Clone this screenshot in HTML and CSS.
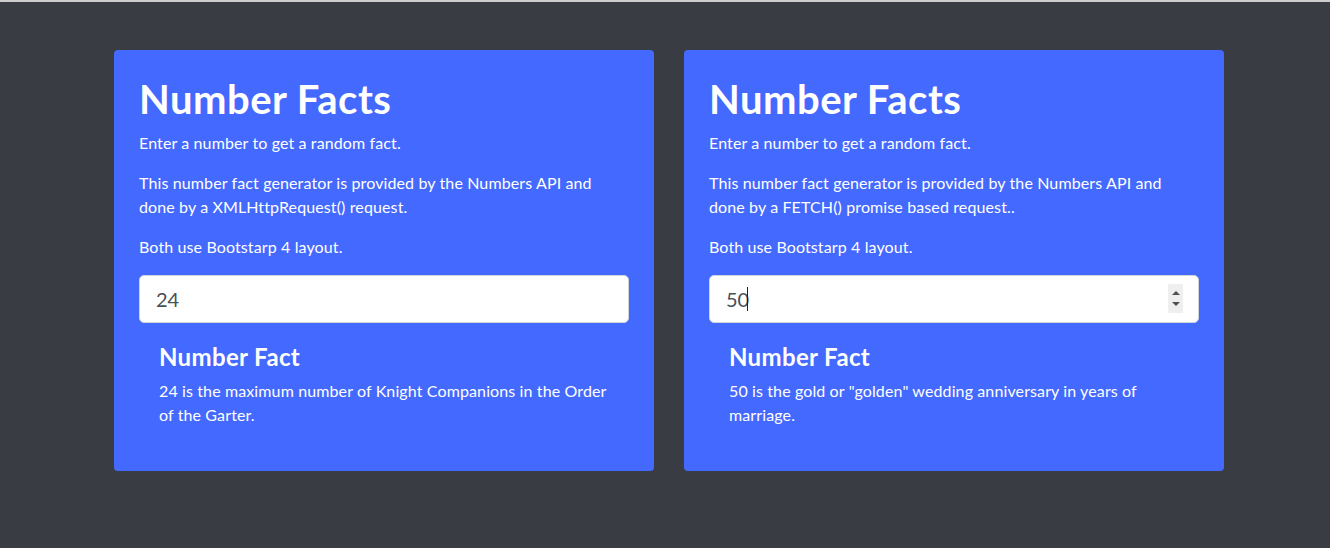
FILE: index.html
```html
<!DOCTYPE html>
<html lang="en">
<head>
<meta charset="utf-8">
<title>Number Facts</title>
<link rel="stylesheet" href="styles.css">
</head>
<body>
<div class="page">
  <div class="cards">
    <section class="card">
      <h1 class="title">Number Facts</h1>
      <p class="lead">Enter a number to get a random fact.</p>
      <p>This number fact generator is provided by the Numbers API and done by a XMLHttpRequest() request.</p>
      <p>Both use Bootstarp 4 layout.</p>
      <div class="field">
        <input class="num-input" type="text" value="24">
      </div>
      <div class="result">
        <h4 class="result-title">Number Fact</h4>
        <p class="fact">24 is the maximum number of Knight Companions in the Order of the Garter.</p>
      </div>
    </section>
    <section class="card">
      <h1 class="title">Number Facts</h1>
      <p class="lead">Enter a number to get a random fact.</p>
      <p>This number fact generator is provided by the Numbers API and done by a FETCH() promise based request..</p>
      <p>Both use Bootstarp 4 layout.</p>
      <div class="field">
        <input class="num-input" type="text" value="50" autofocus>
        <span class="caret"></span>
        <span class="spinner"><span class="up"></span><span class="down"></span></span>
      </div>
      <div class="result">
        <h4 class="result-title">Number Fact</h4>
        <p class="fact">50 is the gold or "golden" wedding anniversary in years of marriage.</p>
      </div>
    </section>
  </div>
</div>
</body>
</html>
```
FILE: styles.css
```css
* { box-sizing: border-box; }
html, body { margin: 0; padding: 0; }
body {
  background: #3a3c44;
  border-top: 2px solid #cdcdcd;
  font-family: Lato, "Open Sans", sans-serif;
  color: #fff;
  height: 548px;
  overflow: hidden;
}
.page {
  padding: 48px 0 0 114px;
}
.cards {
  display: flex;
  gap: 30px;
}
.card {
  width: 540px;
  height: 421px;
  background: #4469ff;
  border-radius: 4px;
  padding: 25px;
}
.title {
  margin: 0 0 8px;
  font-size: 40px;
  line-height: 48px;
  font-weight: 700;
  letter-spacing: 0.5px;
}
.card p {
  margin: 0 0 16px;
  font-size: 16px;
  line-height: 24px;
  letter-spacing: 0.12px;
}
.field {
  position: relative;
}
.num-input {
  display: block;
  width: 100%;
  height: 48px;
  border: 1px solid #ced4da;
  border-radius: 5px;
  padding: 0 16px;
  font-family: inherit;
  font-size: 20px;
  color: #495057;
  background: #fff;
  outline: none;
}
.caret {
  position: absolute;
  left: 38px;
  top: 12px;
  width: 1px;
  height: 24px;
  background: #222;
}
.spinner {
  position: absolute;
  right: 16px;
  top: 9px;
  width: 15px;
  height: 29px;
  background: #efefef;
  display: flex;
  flex-direction: column;
  align-items: center;
  justify-content: center;
  gap: 7px;
}
.spinner .up {
  width: 0; height: 0;
  border-left: 4px solid transparent;
  border-right: 4px solid transparent;
  border-bottom: 4px solid #505050;
}
.spinner .down {
  width: 0; height: 0;
  border-left: 4px solid transparent;
  border-right: 4px solid transparent;
  border-top: 4px solid #505050;
}
.result {
  padding: 20px 20px 0;
}
.result-title {
  margin: 0 0 8px;
  font-size: 24px;
  line-height: 28px;
  font-weight: 700;
  letter-spacing: 0.35px;
}
.card p.fact {
  margin: 0;
}
```
